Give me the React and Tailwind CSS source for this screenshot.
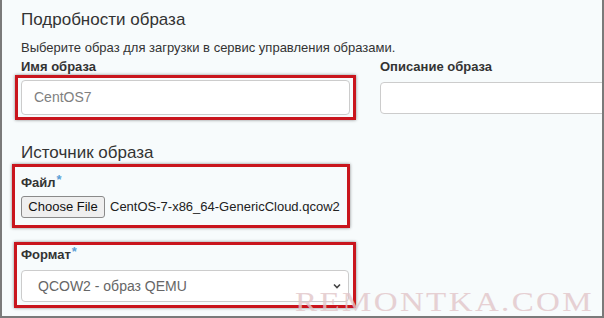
export default function App() {
  return (
    <div className="relative w-[604px] h-[318px] overflow-hidden bg-[#f7fbfc] border-x-2 border-b-2 border-[#7a7a7a] font-['Liberation_Sans',Arial,sans-serif] text-[#333]">
      <div className="pl-[19px] pt-[8px]">
        <h2 className="text-[17px] leading-[24px] font-normal">Подробности образа</h2>
        <p className="mt-[8px] text-[13px] leading-[16px]">
          Выберите образ для загрузки в сервис управления образами.
        </p>

        {/* name + description */}
        <div className="flex gap-[30px]">
          <div className="w-[329px] shrink-0">
            <label className="block mt-[3px] h-[16px] text-[13px] leading-[16px] font-bold">Имя образа</label>
            <div className="-mx-[6px] px-[3px] py-[2px] border-[3px] border-[#c9151d] shadow-[0_0_3px_rgba(0,0,0,0.45)]">
              <div className="h-[35px] bg-white border border-[#ccc] rounded-[4px] flex items-center pl-[12px] text-[14px] text-[#808080]">
                CentOS7
              </div>
            </div>
          </div>
          <div className="w-[329px] shrink-0">
            <label className="block mt-[3px] h-[16px] text-[13px] leading-[16px] font-bold">Описание образа</label>
            <div className="mt-[7px] h-[32px] bg-white border border-[#ccc] rounded-[4px]" />
          </div>
        </div>

        <h2 className="mt-[22px] text-[17px] leading-[22px] font-normal">Источник образа</h2>

        {/* file */}
        <div className="-ml-[9px] w-[338px] border-[3px] border-[#c9151d] pl-[6px] pt-[8px] pb-[7px] shadow-[0_0_3px_rgba(0,0,0,0.45)]">
          <label className="block h-[16px] text-[13px] leading-[16px] font-bold">
            Файл<sup className="text-[#5b9fd6] text-[13px] font-bold relative -top-[3px] ml-[1px]">*</sup>
          </label>
          <div className="mt-[5px] flex items-center gap-[5px]">
            <button className="h-[22px] w-[84px] bg-[#efefef] border border-[#8a8a8a] rounded-[3px] text-[13px] text-[#111]">
              Choose File
            </button>
            <span className="text-[13px] text-[#222]">CentOS-7-x86_64-GenericCloud.qcow2</span>
          </div>
        </div>

        {/* format */}
        <div className="mt-[14px] -ml-[7px] w-[342px] border-[3px] border-[#c9151d] px-[4px] pt-[2px] pb-[3px] shadow-[0_0_3px_rgba(0,0,0,0.45)]">
          <label className="block h-[16px] text-[13px] leading-[16px] font-bold">
            Формат<sup className="text-[#5b9fd6] text-[13px] font-bold relative -top-[3px] ml-[1px]">*</sup>
          </label>
          <div className="mt-[7px] h-[32px] bg-white border border-[#ccc] rounded-[4px] flex items-center justify-between pl-[16px] pr-[6px] text-[14px] text-[#666]">
            <span>QCOW2 - образ QEMU</span>
            <svg width="10" height="10" viewBox="0 0 10 10" fill="none" stroke="#444" strokeWidth="1.6">
              <path d="M2 3.5 L5 6.5 L8 3.5" />
            </svg>
          </div>
        </div>
      </div>

      <div className="absolute left-[293px] top-[287px] origin-left scale-x-[1.18] font-['Liberation_Serif',serif] text-[28px] leading-[30px] tracking-[2px] text-[#e2c6c9] opacity-80 pointer-events-none">
        REMONTKA.COM
      </div>
    </div>
  );
}
